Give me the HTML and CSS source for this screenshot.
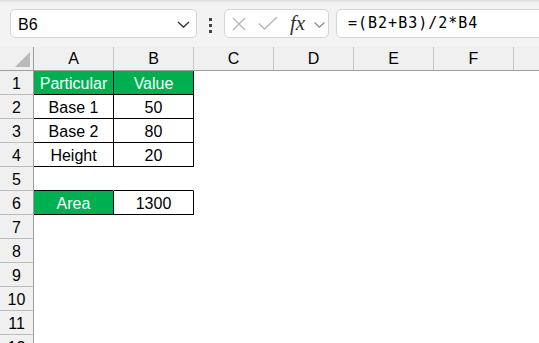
FILE: index.html
```html
<!DOCTYPE html>
<html>
<head>
<meta charset="utf-8">
<link rel="stylesheet" href="styles.css">
</head>
<body>
<div class="toolbar">
  <div class="namebox">
    <span class="name">B6</span>
    <svg class="nb-chev" width="13" height="7" viewBox="0 0 13 7"><path d="M1 1 L6.5 6 L12 1" fill="none" stroke="#333" stroke-width="1.3"/></svg>
  </div>
  <div class="dots"><i></i><i></i><i></i></div>
  <div class="fxgroup">
    <svg class="ic-x" width="14" height="14" viewBox="0 0 14 14"><path d="M1 1 L13 13 M13 1 L1 13" fill="none" stroke="#b4b4b4" stroke-width="1.3"/></svg>
    <svg class="ic-check" width="20" height="14" viewBox="0 0 20 14"><path d="M1 7.5 L6.5 13 L19 1" fill="none" stroke="#b4b4b4" stroke-width="1.3"/></svg>
    <span class="fx">fx</span>
    <svg class="ic-chev" width="11" height="6" viewBox="0 0 11 6"><path d="M0.5 0.5 L5.5 5.2 L10.5 0.5" fill="none" stroke="#8a8a8a" stroke-width="1.2"/></svg>
  </div>
  <div class="formula">=(B2+B3)/2*B4</div>
</div>
<div class="sheet">
  <div class="corner"><svg width="34" height="23" viewBox="0 0 34 23"><path d="M30 5 L30 20 L15 20 Z" fill="#b9b9b9"/></svg></div>
  <div class="ch">A</div><div class="ch">B</div><div class="ch">C</div><div class="ch">D</div><div class="ch">E</div><div class="ch">F</div><div class="ch"></div>

  <div class="rh">1</div>
  <div class="c t g">Particular</div><div class="c t g">Value</div><div class="c"></div><div class="c"></div><div class="c"></div><div class="c"></div><div class="c"></div>

  <div class="rh">2</div>
  <div class="c t">Base 1</div><div class="c t">50</div><div class="c"></div><div class="c"></div><div class="c"></div><div class="c"></div><div class="c"></div>

  <div class="rh">3</div>
  <div class="c t">Base 2</div><div class="c t">80</div><div class="c"></div><div class="c"></div><div class="c"></div><div class="c"></div><div class="c"></div>

  <div class="rh">4</div>
  <div class="c t">Height</div><div class="c t">20</div><div class="c"></div><div class="c"></div><div class="c"></div><div class="c"></div><div class="c"></div>

  <div class="rh">5</div>
  <div class="c bb"></div><div class="c bb"></div><div class="c"></div><div class="c"></div><div class="c"></div><div class="c"></div><div class="c"></div>

  <div class="rh">6</div>
  <div class="c t g">Area</div><div class="c t">1300</div><div class="c"></div><div class="c"></div><div class="c"></div><div class="c"></div><div class="c"></div>

  <div class="rh">7</div>
  <div class="c"></div><div class="c"></div><div class="c"></div><div class="c"></div><div class="c"></div><div class="c"></div><div class="c"></div>
  <div class="rh">8</div>
  <div class="c"></div><div class="c"></div><div class="c"></div><div class="c"></div><div class="c"></div><div class="c"></div><div class="c"></div>
  <div class="rh">9</div>
  <div class="c"></div><div class="c"></div><div class="c"></div><div class="c"></div><div class="c"></div><div class="c"></div><div class="c"></div>
  <div class="rh">10</div>
  <div class="c"></div><div class="c"></div><div class="c"></div><div class="c"></div><div class="c"></div><div class="c"></div><div class="c"></div>
  <div class="rh">11</div>
  <div class="c"></div><div class="c"></div><div class="c"></div><div class="c"></div><div class="c"></div><div class="c"></div><div class="c"></div>
  <div class="rh">12</div>
  <div class="c"></div><div class="c"></div><div class="c"></div><div class="c"></div><div class="c"></div><div class="c"></div><div class="c"></div>
</div>
</body>
</html>
```
FILE: styles.css
```css
html, body {
  margin: 0;
  padding: 0;
  background: #ffffff;
  width: 539px;
  height: 343px;
  overflow: hidden;
  font-family: "Liberation Sans", Arial, sans-serif;
  color: #000;
}

.toolbar {
  height: 47px;
  box-sizing: border-box;
  padding: 9px 0 0 10px;
  display: flex;
  align-items: flex-start;
  background: linear-gradient(#dcdcdc 0, #ececec 2px, #f3f3f3 4px, #f3f3f3 100%);
  overflow: hidden;
  white-space: nowrap;
}

.namebox {
  width: 187px;
  height: 29px;
  box-sizing: border-box;
  background: #fff;
  border: 1px solid #d5d5d5;
  border-radius: 5px;
  display: flex;
  align-items: center;
  padding: 0 6px 0 7px;
  flex: none;
}

.name {
  flex: 1;
  font-size: 16px;
  line-height: 27px;
  padding-top: 1px;
}

.nb-chev {
  display: block;
  margin-top: 2px;
}

.dots {
  width: 3px;
  margin: 9px 12px 0 12px;
  display: flex;
  flex-direction: column;
  gap: 3px;
  flex: none;
}

.dots i {
  display: block;
  width: 3px;
  height: 3px;
  background: #444;
}

.fxgroup {
  width: 105px;
  height: 29px;
  box-sizing: border-box;
  background: #fff;
  border: 1px solid #d5d5d5;
  border-radius: 5px;
  display: flex;
  align-items: center;
  padding-left: 7px;
  flex: none;
}

.ic-x { display: block; margin-top: 1px; }
.ic-check { display: block; margin-left: 12px; margin-top: -1px; }

.fx {
  margin-left: 12px;
  width: 18px;
  font-family: "Liberation Serif", "Times New Roman", serif;
  font-style: italic;
  font-weight: normal;
  font-size: 21px;
  line-height: 27px;
  color: #333;
}

.ic-chev { display: block; margin-left: 6px; margin-top: 2px; }

.formula {
  margin-left: 7px;
  width: 300px;
  height: 29px;
  box-sizing: border-box;
  background: #fff;
  border: 1px solid #d5d5d5;
  border-radius: 5px;
  padding-left: 11px;
  font-family: "DejaVu Sans Mono", monospace;
  font-size: 15px;
  letter-spacing: 1px;
  line-height: 27px;
  flex: none;
}

.sheet {
  display: grid;
  grid-template-columns: 34px repeat(7, 80px);
  grid-auto-rows: 24px;
  font-size: 16px;
}

.sheet > div {
  box-sizing: border-box;
  border-right: 1px solid transparent;
  border-bottom: 1px solid transparent;
  text-align: center;
  padding-top: 2px;
  line-height: 21px;
  white-space: nowrap;
  overflow: hidden;
}

.sheet > .corner {
  background: #f0f0f0;
  border-right: 1px solid #9e9e9e;
  border-bottom: 1px solid #9e9e9e;
  padding: 0;
}

.corner svg { display: block; }

.sheet > .ch {
  background: #f0f0f0;
  border-right: 1px solid #c6c6c6;
  border-bottom: 1px solid #9e9e9e;
  padding-top: 1px;
}

.sheet > .rh {
  background: #f0f0f0;
  border-right: 1px solid #9e9e9e;
  border-bottom: 1px solid #bcbcbc;
}

.sheet > .t {
  border-right-color: #000;
  border-bottom-color: #000;
}

.sheet > .bb {
  border-bottom-color: #000;
}

.sheet > .g {
  background: #00b050;
  color: #fff;
}
```
